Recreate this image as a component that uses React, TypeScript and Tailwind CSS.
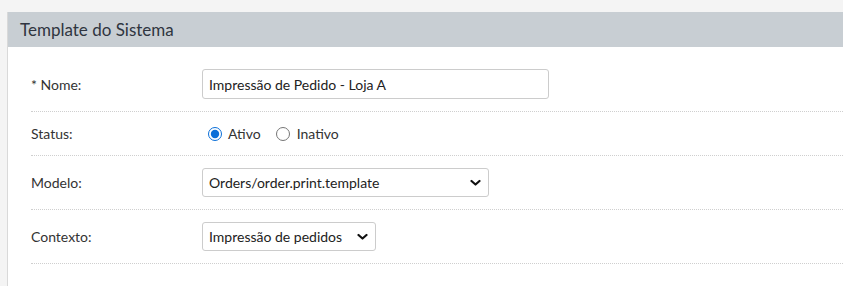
const font = { fontFamily: 'Lato, "Liberation Sans", sans-serif' };

function Chevron() {
  return (
    <svg className="pointer-events-none absolute right-[8px] top-1/2 -translate-y-1/2" width="11" height="7" viewBox="0 0 11 7" fill="none">
      <path d="M1.5 1.5l4 3.5 4-3.5" stroke="#111" strokeWidth="2.2" strokeLinecap="round" strokeLinejoin="round" />
    </svg>
  );
}

function Row({ label, children, tall = true }: { label: string; children: React.ReactNode; tall?: boolean }) {
  return (
    <div className={`flex items-center border-b border-dotted border-[#cfcfcf] ${tall ? 'py-[12px]' : 'h-[44px]'}`}>
      <div className="w-[171px] shrink-0 text-[14px] text-[#333]">{label}</div>
      <div className="flex items-center">{children}</div>
    </div>
  );
}

export default function App() {
  return (
    <div className="w-[843px] h-[286px] bg-[#f4f4f4] pt-[12px] pl-[7px] overflow-hidden" style={font}>
      <div className="h-full bg-white border-l border-[#d9d9d9]">
        <div className="h-[35px] bg-[#c8ced3] flex items-center pl-[12px] text-[17px] text-[#2f3540]">
          Template do Sistema
        </div>
        <div className="pl-[23px] pt-[10px]">
          <Row label="* Nome:">
            <input
              defaultValue="Impressão de Pedido - Loja A"
              className="w-[347px] h-[30px] border border-[#cccccc] rounded-[3px] px-[6px] text-[14px] text-[#222] outline-none"
              style={font}
            />
          </Row>
          <Row label="Status:" tall={false}>
            <label className="flex items-center text-[14px] text-[#333] ml-[6px]">
              <input type="radio" name="status" defaultChecked className="w-[14px] h-[14px] m-0 accent-[#0b6fd8]" />
              <span className="ml-[6px]">Ativo</span>
            </label>
            <label className="flex items-center text-[14px] text-[#333] ml-[15px]">
              <input type="radio" name="status" className="w-[14px] h-[14px] m-0" />
              <span className="ml-[7px]">Inativo</span>
            </label>
          </Row>
          <Row label="Modelo:">
            <div className="relative">
              <select
                className="appearance-none w-[287px] h-[29px] border border-[#cccccc] rounded-[3px] pl-[6px] text-[14px] text-[#222] bg-white outline-none"
                style={font}
              >
                <option>Orders/order.print.template</option>
              </select>
              <Chevron />
            </div>
          </Row>
          <Row label="Contexto:">
            <div className="relative">
              <select
                className="appearance-none w-[174px] h-[29px] border border-[#cccccc] rounded-[3px] pl-[6px] text-[14px] text-[#222] bg-white outline-none"
                style={font}
              >
                <option>Impressão de pedidos</option>
              </select>
              <Chevron />
            </div>
          </Row>
        </div>
      </div>
    </div>
  );
}
